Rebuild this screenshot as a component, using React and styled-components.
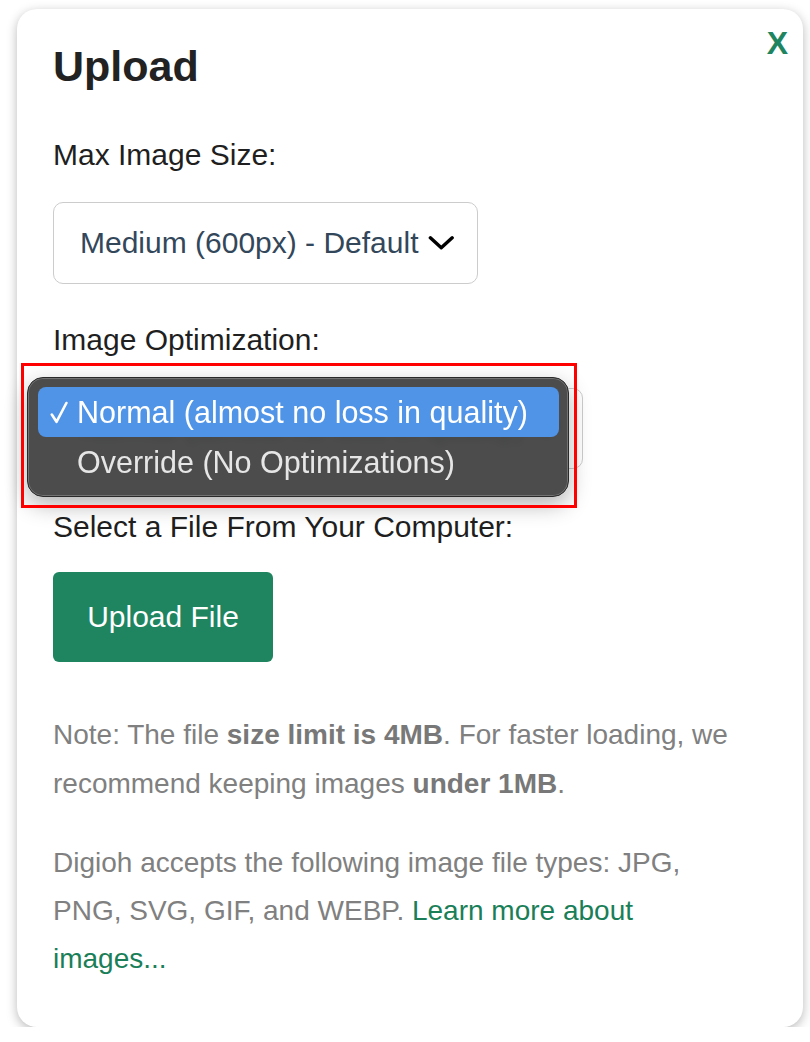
import React from 'react';
import styled, { createGlobalStyle } from 'styled-components';

const GlobalStyle = createGlobalStyle`
  html, body {
    margin: 0;
    padding: 0;
    background: #ffffff;
  }
  body {
    font-family: "Liberation Sans", Arial, Helvetica, sans-serif;
    color: #1f1f1f;
  }
`;

const Card = styled.div`
  position: relative;
  box-sizing: border-box;
  width: 786px;
  height: 1018px;
  margin: 9px 0 0 17px;
  padding: 32px 66px 0 36px;
  background: #fff;
  border-radius: 20px;
  box-shadow: 0 3px 11px rgba(0, 0, 0, 0.28);
`;

const Close = styled.button`
  position: absolute;
  top: 18px;
  right: 15px;
  padding: 0;
  border: 0;
  background: none;
  font-family: inherit;
  font-size: 32px;
  line-height: 32px;
  font-weight: 700;
  color: #1e8560;
  cursor: pointer;
`;

const Title = styled.h1`
  margin: 0;
  font-size: 43px;
  line-height: 50px;
  font-weight: 700;
  color: #222;
`;

const Label = styled.div`
  margin-top: ${(p) => p.$gap}px;
  font-size: 30px;
  line-height: 36px;
  color: #1f1f1f;
`;

const SelectWrap = styled.div`
  position: relative;
  margin-top: ${(p) => p.$gap}px;
  width: ${(p) => p.$width}px;
`;

const SelectBox = styled.div`
  box-sizing: border-box;
  display: flex;
  align-items: center;
  gap: 10px;
  width: 100%;
  height: ${(p) => p.$height}px;
  padding: 0 22px 0 26px;
  border: 1.5px solid #cccccc;
  border-radius: 10px;
  font-size: 30px;
  color: #33475b;
  white-space: nowrap;
`;

const Chevron = () => (
  <svg width="28" height="16" viewBox="0 0 28 16" fill="none">
    <path d="M2.5 2.5 L14 13 L25.5 2.5" stroke="#000" strokeWidth="3.6" strokeLinecap="round" strokeLinejoin="round" />
  </svg>
);

const Highlight = styled.div`
  position: absolute;
  left: -32px;
  top: -25px;
  width: 556px;
  height: 145px;
  box-sizing: border-box;
  border: 3px solid #ff0000;
  pointer-events: none;
`;

const Menu = styled.div`
  position: absolute;
  left: -26px;
  top: -11px;
  width: 542px;
  height: 120px;
  box-sizing: border-box;
  padding: 9px 9px 10px 10px;
  border-radius: 16px;
  background: rgba(62, 62, 62, 0.93);
  backdrop-filter: blur(5px);
  border: 1px solid #2a2a2a;
  box-shadow: inset 0 0 0 1px rgba(255, 255, 255, 0.22), 0 8px 22px rgba(0, 0, 0, 0.3);
`;

const Option = styled.div`
  display: flex;
  align-items: center;
  height: 50px;
  padding-left: 12px;
  border-radius: 8px;
  background: ${(p) => (p.$active ? '#5094e8' : 'transparent')};
  color: ${(p) => (p.$active ? '#fff' : '#e6e6e6')};
  font-size: 30.5px;
  white-space: nowrap;
`;

const CheckSlot = styled.span`
  display: inline-flex;
  align-items: center;
  width: 27px;
  height: 24px;
`;

const CheckMark = () => (
  <svg width="18" height="23" viewBox="0 0 18 23" fill="none">
    <path d="M1.8 13.5 L6.5 20.8 L16.4 2" stroke="#fff" strokeWidth="2.6" strokeLinecap="round" strokeLinejoin="round" />
  </svg>
);

const UploadButton = styled.button`
  margin-top: 27px;
  width: 220px;
  height: 90px;
  border: 0;
  border-radius: 6px;
  background: #1e8560;
  color: #fff;
  font-family: inherit;
  font-size: 30px;
  cursor: pointer;
`;

const Note = styled.p`
  margin: ${(p) => p.$gap}px 0 0;
  font-size: 28px;
  line-height: ${(p) => p.$lh}px;
  color: #808080;

  b {
    font-weight: 700;
    color: #787878;
  }
`;

const Link = styled.a`
  color: #1a7f58;
  text-decoration: none;
`;

export default function App() {
  return (
    <>
      <GlobalStyle />
      <Card>
        <Close>X</Close>
        <Title>Upload</Title>

        <Label $gap={46}>Max Image Size:</Label>
        <SelectWrap $gap={29} $width={425}>
          <SelectBox $height={82}>
            <span>Medium (600px) - Default</span>
            <Chevron />
          </SelectBox>
        </SelectWrap>

        <Label $gap={38}>Image Optimization:</Label>
        <SelectWrap $gap={30} $width={530}>
          <SelectBox $height={81}>
            <span>Normal (almost no loss in quality)</span>
            <Chevron />
          </SelectBox>
          <Menu>
            <Option $active>
              <CheckSlot>
                <CheckMark />
              </CheckSlot>
              Normal (almost no loss in quality)
            </Option>
            <Option>
              <CheckSlot />
              Override (No Optimizations)
            </Option>
          </Menu>
          <Highlight />
        </SelectWrap>

        <Label $gap={40}>Select a File From Your Computer:</Label>
        <UploadButton>Upload File</UploadButton>

        <Note $gap={48} $lh={49}>
          Note: The file <b>size limit is 4MB</b>. For faster loading, we recommend keeping images{' '}
          <b>under 1MB</b>.
        </Note>
        <Note $gap={31} $lh={48}>
          Digioh accepts the following image file types: JPG, PNG, SVG, GIF, and WEBP.{' '}
          <Link href="#">Learn more about images...</Link>
        </Note>
      </Card>
    </>
  );
}
